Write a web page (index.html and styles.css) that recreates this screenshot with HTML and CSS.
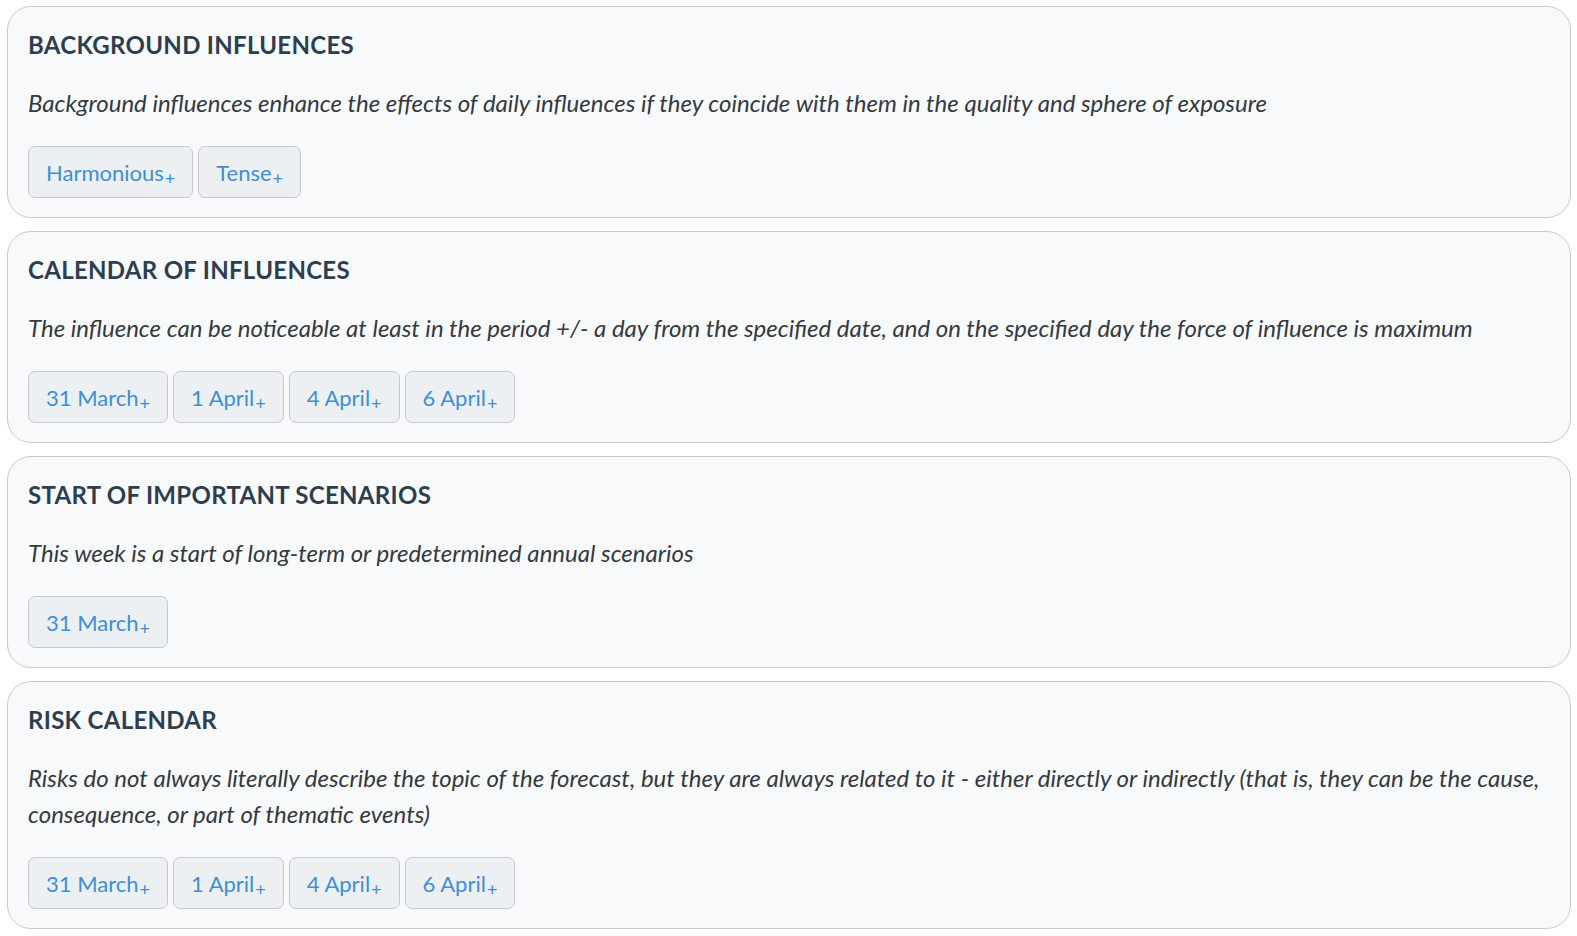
FILE: index.html
```html
<!DOCTYPE html>
<html>
<head>
<meta charset="utf-8">
<link rel="stylesheet" href="styles.css">
</head>
<body>
<div class="page">
  <section class="card">
    <h2 class="card-title">BACKGROUND INFLUENCES</h2>
    <p class="card-desc">Background influences enhance the effects of daily influences if they coincide with them in the quality and sphere of exposure</p>
    <div class="tags">
      <button class="tag">Harmonious<sub>+</sub></button>
      <button class="tag">Tense<sub>+</sub></button>
    </div>
  </section>
  <section class="card">
    <h2 class="card-title">CALENDAR OF INFLUENCES</h2>
    <p class="card-desc">The influence can be noticeable at least in the period +/- a day from the specified date, and on the specified day the force of influence is maximum</p>
    <div class="tags">
      <button class="tag">31 March<sub>+</sub></button>
      <button class="tag">1 April<sub>+</sub></button>
      <button class="tag">4 April<sub>+</sub></button>
      <button class="tag">6 April<sub>+</sub></button>
    </div>
  </section>
  <section class="card">
    <h2 class="card-title">START OF IMPORTANT SCENARIOS</h2>
    <p class="card-desc">This week is a start of long-term or predetermined annual scenarios</p>
    <div class="tags">
      <button class="tag">31 March<sub>+</sub></button>
    </div>
  </section>
  <section class="card">
    <h2 class="card-title">RISK CALENDAR</h2>
    <p class="card-desc">Risks do not always literally describe the topic of the forecast, but they are always related to it - either directly or indirectly (that is, they can be the cause, consequence, or part of thematic events)</p>
    <div class="tags">
      <button class="tag">31 March<sub>+</sub></button>
      <button class="tag">1 April<sub>+</sub></button>
      <button class="tag">4 April<sub>+</sub></button>
      <button class="tag">6 April<sub>+</sub></button>
    </div>
  </section>
</div>
</body>
</html>
```

FILE: styles.css
```css
html, body {
  margin: 0;
  padding: 0;
  background: #ffffff;
}
body {
  font-family: Lato, "Open Sans", sans-serif;
  color: #2c3e50;
}
.page {
  padding: 6px 6px 0 7px;
  display: flex;
  flex-direction: column;
  gap: 13px;
}
.card {
  background: #f8f9fa;
  border: 1px solid #c8cacc;
  border-radius: 24px;
  padding: 23px 20px 19px;
}
.card-title {
  margin: 0;
  font-size: 24px;
  font-weight: 700;
  line-height: 29px;
  color: #2c3e50;
  letter-spacing: 0.3px;
}
.card-desc {
  margin: 26px 0 25px;
  font-size: 24px;
  font-style: italic;
  line-height: 36px;
  color: #343a40;
}
.tags {
  display: flex;
  gap: 5px;
}
.tag {
  height: 52px;
  padding: 0 17px;
  background: #edf0f2;
  border: 1px solid #c6c9cc;
  border-radius: 7px;
  font-family: Lato, "Open Sans", sans-serif;
  font-size: 22px;
  color: #3d8fd8;
  display: flex;
  align-items: center;
}
.tag sub {
  font-size: 18px;
  line-height: 1;
  vertical-align: baseline;
  position: relative;
  top: 6px;
  margin-left: 1px;
}
```
